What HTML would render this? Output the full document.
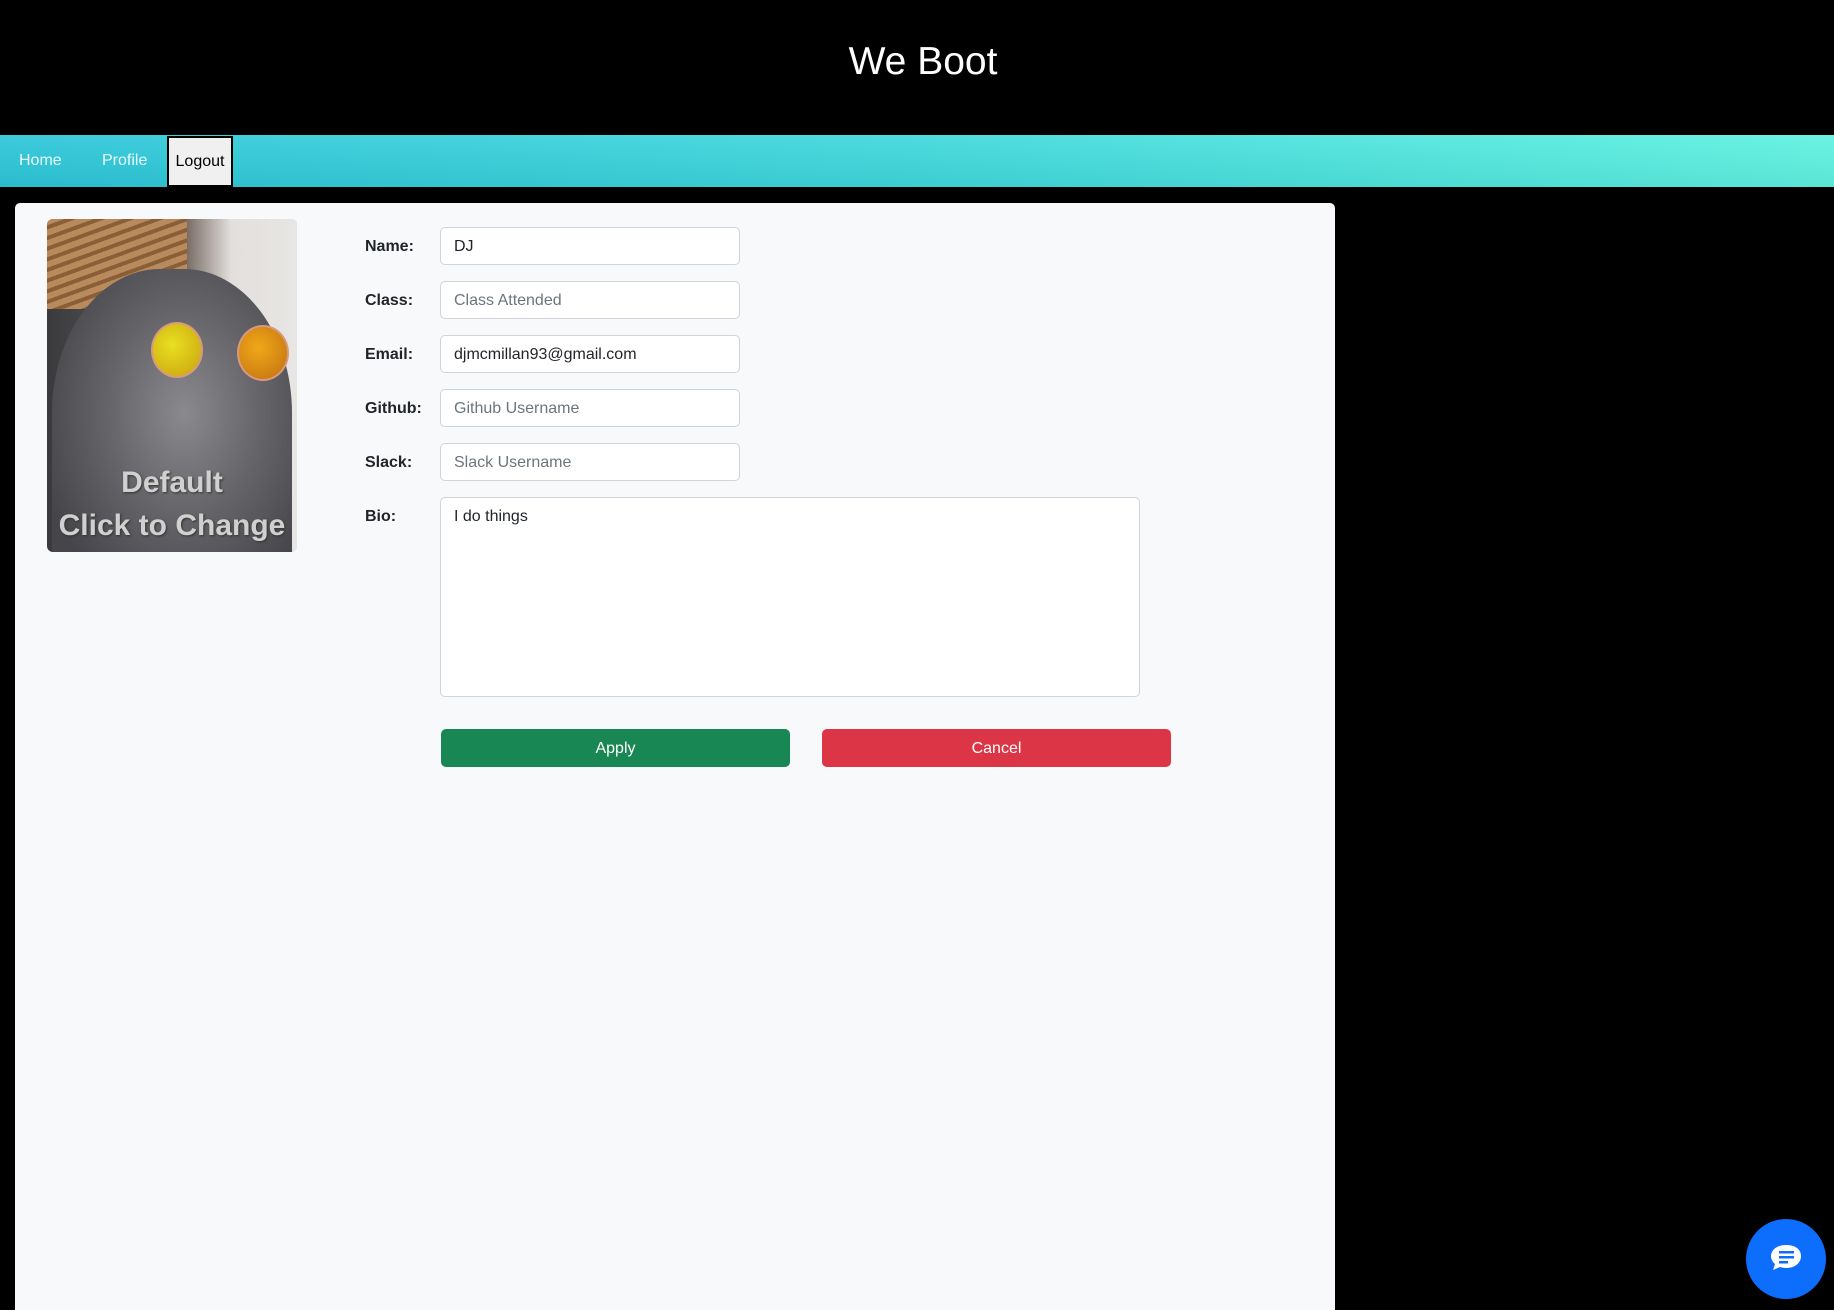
<!DOCTYPE html>
<html><head><meta charset="utf-8"><style>
*{box-sizing:border-box;margin:0;padding:0}
html,body{width:1834px;height:1310px;overflow:hidden}
body{background:#000;font-family:"Liberation Sans",Arial,sans-serif;position:relative}
.title{position:absolute;top:40px;left:0;width:1846px;text-align:center;color:#fff;font-size:39px}
.nav{position:absolute;top:135px;left:0;width:1834px;height:52px;background:linear-gradient(180deg,rgba(255,255,255,0.08),rgba(0,0,0,0.05)),linear-gradient(90deg,#2cc6d9 0%,#3fd8dc 50%,#5ef2e0 100%)}
.nav a{position:absolute;top:17px;color:#e8f8f8;font-size:16px;text-decoration:none}
.logout{position:absolute;left:167px;top:136px;width:66px;height:51px;background:#f0f0f0;border:2px solid #000;font-size:16px;color:#000;text-align:center;line-height:47px}
.card{position:absolute;left:15px;top:203px;width:1320px;height:1107px;background:#f8f9fa;border-radius:5px 5px 0 0}
.pic{position:absolute;left:47px;top:219px;width:250px;height:333px;border-radius:6px;overflow:hidden;background:linear-gradient(90deg,#3a3a3c 0%,#5c5c60 40%,#6e6e72 70%,#b8b8b8 100%)}
label{position:absolute;left:365px;font-weight:bold;font-size:16px;color:#212529}
.in{position:absolute;left:440px;width:300px;height:38px;background:#fff;border:1px solid #ced4da;border-radius:5px;padding:0 13px;line-height:37px;font-size:16px;color:#212529}
.ph{color:#6c757d}
.btn{position:absolute;top:729px;height:38px;width:349px;border-radius:5px;color:#fff;text-align:center;line-height:39px;font-size:16px}
</style></head><body>
<div class="title">We Boot</div>
<div class="nav"><a style="left:19px">Home</a><a style="left:102px">Profile</a></div>
<div class="logout">Logout</div>
<div class="card"></div>
<div class="pic">
<div style="position:absolute;left:0;top:0;width:140px;height:90px;background:repeating-linear-gradient(160deg,#b88a5c 0 6px,#8a5f38 6px 10px)"></div>
<div style="position:absolute;left:140px;top:0;width:110px;height:333px;background:linear-gradient(90deg,#7a6d66,#e2dfdc 40%,#e8e6e4)"></div>
<div style="position:absolute;left:5px;top:50px;width:240px;height:320px;border-radius:45% 45% 10% 10%;background:radial-gradient(ellipse at 55% 45%,#8a8a8e 0%,#66666a 40%,#45454a 80%)"></div>
<div style="position:absolute;left:104px;top:103px;width:52px;height:56px;border-radius:50%;background:radial-gradient(circle at 40% 40%,#e8e020,#c9a010);border:2px solid #d79a80"></div>
<div style="position:absolute;left:190px;top:106px;width:52px;height:56px;border-radius:50%;background:radial-gradient(circle at 40% 40%,#f0a818,#c07010);border:2px solid #d79a80"></div>
<div style="position:absolute;left:0;top:242px;width:250px;text-align:center;color:#d0d0d0;font-weight:bold;font-size:30px;line-height:43px;text-shadow:1px 1px 2px #333">Default<br>Click to Change</div>
</div>
<label style="top:238px">Name:</label><div class="in" style="top:227px">DJ</div>
<label style="top:292px">Class:</label><div class="in ph" style="top:281px">Class Attended</div>
<label style="top:346px">Email:</label><div class="in" style="top:335px">djmcmillan93@gmail.com</div>
<label style="top:400px">Github:</label><div class="in ph" style="top:389px">Github Username</div>
<label style="top:454px">Slack:</label><div class="in ph" style="top:443px">Slack Username</div>
<label style="top:508px">Bio:</label><div class="in" style="top:497px;width:700px;height:200px;line-height:37px">I do things</div>
<div class="btn" style="left:441px;background:#198754">Apply</div>
<div class="btn" style="left:822px;background:#dc3545">Cancel</div>
<div style="position:absolute;left:1746px;top:1219px;width:80px;height:80px;border-radius:50%;background:#0d6efd"></div>
<svg style="position:absolute;left:1768px;top:1242px" width="36" height="34" viewBox="0 0 36 34"><path d="M18 3C9 3 3 8 3 14c0 3 1.5 6 4 8l-2 6 7-3c2 .6 4 1 6 1 9 0 15-5 15-12S27 3 18 3z" fill="#fff"/><rect x="11" y="9" width="15" height="2.5" fill="#0d6efd"/><rect x="11" y="14" width="15" height="2.5" fill="#0d6efd"/><rect x="11" y="19" width="9" height="2.5" fill="#0d6efd"/></svg>
</body></html>
